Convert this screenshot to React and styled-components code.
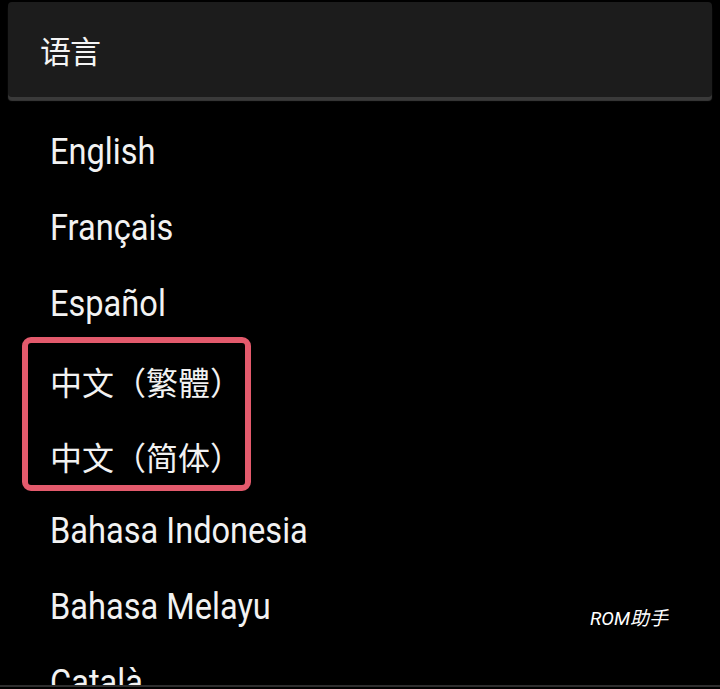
import React from 'react';
import styled, { createGlobalStyle } from 'styled-components';

const GlobalStyle = createGlobalStyle`
    html, body {
        margin: 0;
        padding: 0;
        background: #000;
    }
    body {
        font-family: Roboto, "Noto Sans CJK SC", sans-serif;
        color: #f2f2f2;
    }
`

const Screen = styled.div`
    position: relative;
    width: 720px;
    height: 689px;
    overflow: hidden;
    background: #000;
    padding-top: 2px;
    box-sizing: border-box;
`

const Header = styled.div`
    margin: 0 8px;
    height: 95px;
    background: #1c1c1c;
    border-radius: 4px;
    box-shadow: 0 4px 1px #3a3a3a;
    display: flex;
    align-items: center;
    padding-left: 32px;
    box-sizing: border-box;
`

const Title = styled.h1`
    margin: 0;
    font-family: "Noto Sans CJK SC", sans-serif;
    font-weight: 400;
    font-size: 31px;
    color: #f4f4f4;
    letter-spacing: -1px;
`

const List = styled.div`
    height: 588px;
    overflow: hidden;
    padding-top: 17px;
    box-sizing: border-box;
    display: flex;
    flex-direction: column;
`

const Row = styled.div`
    height: ${p => p.h || 76}px;
    flex-shrink: 0;
    display: flex;
    align-items: center;
    padding-left: ${p => p.inset || 50}px;
`

const Label = styled.span`
    font-family: ${p => p.cjk ? '"Noto Sans CJK SC", sans-serif' : 'Roboto, sans-serif'};
    font-size: ${p => p.cjk ? 32 : 32.6}px;
    color: #f2f2f2;
    display: inline-block;
    white-space: nowrap;
    transform: ${p => p.cjk ? 'none' : 'scaleY(1.12)'};
    transform-origin: left center;
`

const Highlight = styled.div`
    flex-shrink: 0;
    margin: -5px 0 2px 22px;
    width: 229px;
    height: 154px;
    box-sizing: border-box;
    border: 6px solid #e35a6c;
    border-radius: 9px;
    display: flex;
    flex-direction: column;
`

const Divider = styled.div`
    height: 2px;
    background: #2e2e2e;
`

const Watermark = styled.div`
    position: absolute;
    left: 590px;
    top: 603px;
    font-family: Roboto, "Noto Sans CJK SC", sans-serif;
    font-style: italic;
    font-size: 19px;
    color: #fff;
`

const before = ['English', 'Français', 'Español']
const chinese = ['中文（繁體）', '中文（简体）']
const after = ['Bahasa Indonesia', 'Bahasa Melayu', 'Català']

export default function App() {
    return (
        <Screen>
            <GlobalStyle />
            <Header>
                <Title>语言</Title>
            </Header>
            <List>
                {before.map(name => (
                    <Row key={name}><Label>{name}</Label></Row>
                ))}
                <Highlight>
                    {chinese.map(name => (
                        <Row key={name} h={75} inset={22}><Label cjk>{name}</Label></Row>
                    ))}
                </Highlight>
                {after.map(name => (
                    <Row key={name}><Label>{name}</Label></Row>
                ))}
            </List>
            <Divider />
            <Watermark>ROM助手</Watermark>
        </Screen>
    );
}
